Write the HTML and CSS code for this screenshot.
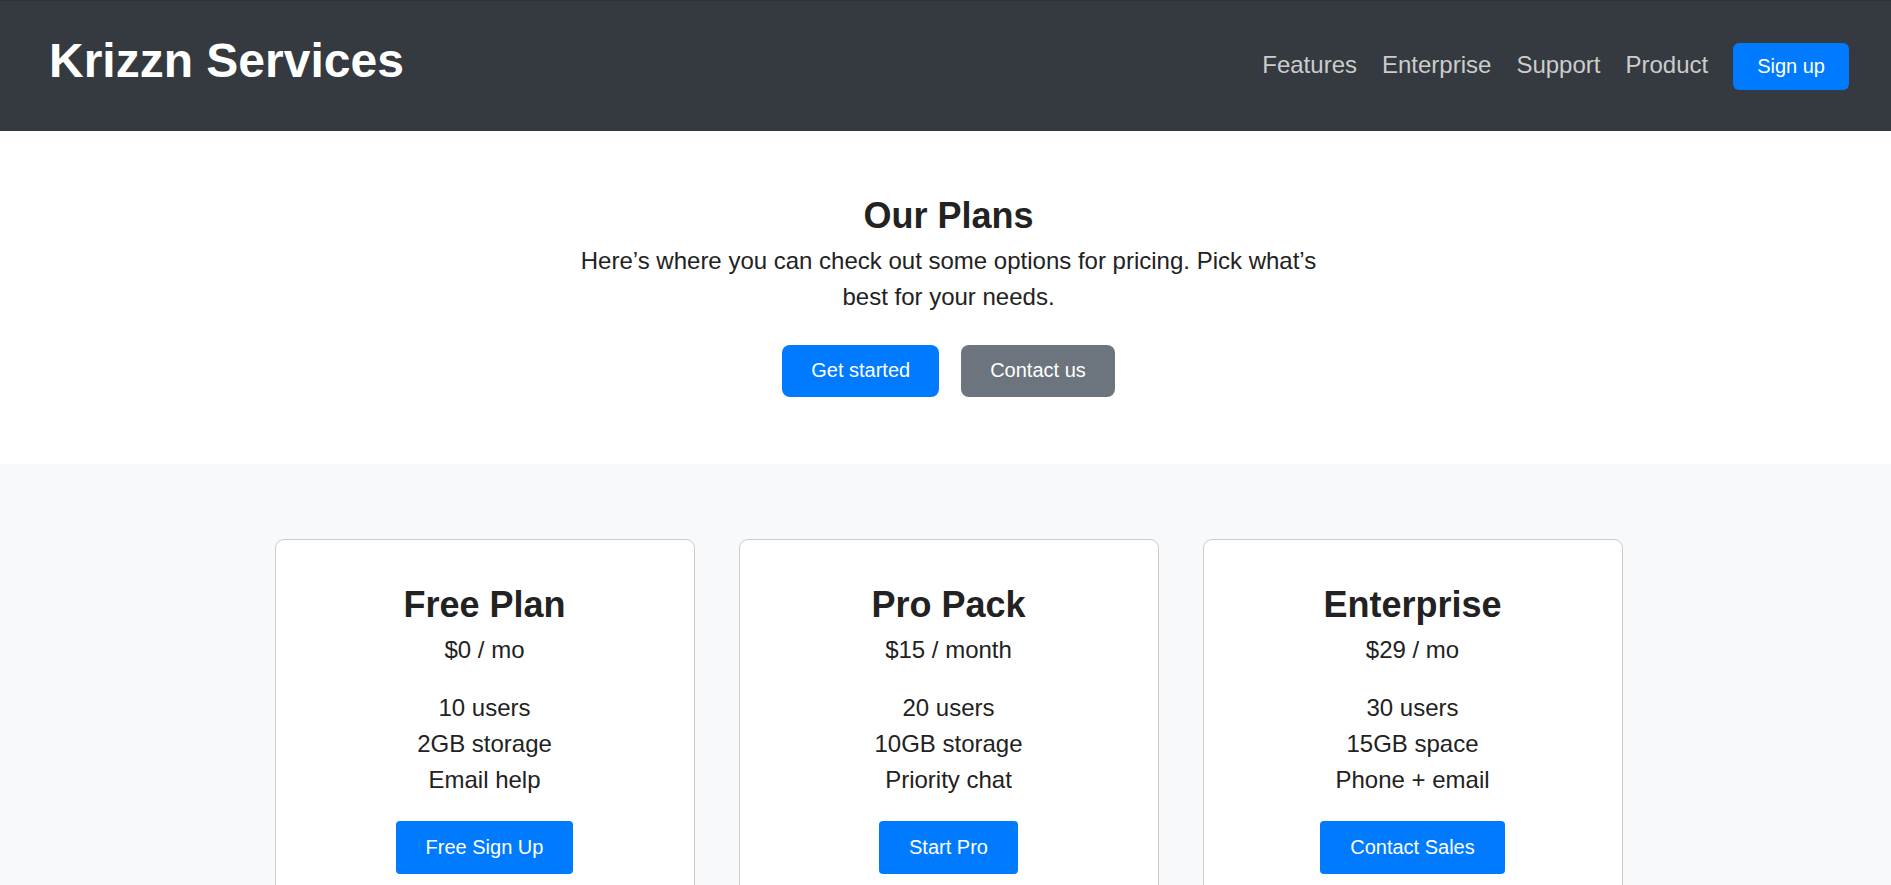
FILE: index.html
```
<!DOCTYPE html>
<html lang="en">
<head>
<meta charset="utf-8">
<meta name="viewport" content="width=device-width, initial-scale=1">
<title>Krizzn Services</title>
<link rel="stylesheet" href="styles.css">
</head>
<body>
<header class="site-header">
  <h1 class="brand">Krizzn Services</h1>
  <nav class="site-nav">
    <a class="nav-link" href="#features">Features</a>
    <a class="nav-link" href="#enterprise">Enterprise</a>
    <a class="nav-link" href="#support">Support</a>
    <a class="nav-link" href="#product">Product</a>
    <button class="btn btn-small" type="button">Sign up</button>
  </nav>
</header>
<main>
  <section class="hero">
    <h2 class="heading">Our Plans</h2>
    <p class="lead">Here’s where you can check out some options for pricing. Pick what’s best for your needs.</p>
    <div class="hero-actions">
      <button class="btn btn-hero" type="button">Get started</button>
      <button class="btn btn-hero btn-secondary" type="button">Contact us</button>
    </div>
  </section>
  <section class="plans">
    <article class="card">
      <h2 class="heading">Free Plan</h2>
      <p class="price">$0 / mo</p>
      <ul class="perks"><li>10 users</li><li>2GB storage</li><li>Email help</li></ul>
      <button class="btn btn-card" type="button">Free Sign Up</button>
    </article>
    <article class="card">
      <h2 class="heading">Pro Pack</h2>
      <p class="price">$15 / month</p>
      <ul class="perks"><li>20 users</li><li>10GB storage</li><li>Priority chat</li></ul>
      <button class="btn btn-card" type="button">Start Pro</button>
    </article>
    <article class="card">
      <h2 class="heading">Enterprise</h2>
      <p class="price">$29 / mo</p>
      <ul class="perks"><li>30 users</li><li>15GB space</li><li>Phone + email</li></ul>
      <button class="btn btn-card" type="button">Contact Sales</button>
    </article>
  </section>
</main>
</body>
</html>
```
FILE: styles.css
```
* {
  box-sizing: border-box;
  margin: 0;
  padding: 0;
}

body {
  font: 24px/36px "Liberation Sans", Arial, sans-serif;
  color: #222;
  background: #fff;
}

.site-header {
  display: flex;
  flex-wrap: wrap;
  justify-content: space-between;
  align-items: center;
  padding: 24px 42px 24px 49px;
  border-top: 1px solid #2f3033;
  background: #343a40;
}

.brand {
  margin-bottom: 10px;
  font-size: 48px;
  line-height: 72px;
  color: #fff;
}

.site-nav {
  display: flex;
  flex-wrap: wrap;
  align-items: baseline;
  gap: 25px;
}

.nav-link {
  color: #ccc;
  text-decoration: none;
}

.btn {
  border: 0;
  font: 20px/23px "Liberation Sans", Arial, sans-serif;
  color: #fff;
  background: #007bff;
  cursor: pointer;
}

.btn-small {
  padding: 12px 24px;
  border-radius: 6px;
}

.btn-hero {
  padding: 14px 29px 15px;
  border-radius: 8px;
}

.btn-secondary {
  background: #6c757d;
}

.btn-card {
  padding: 15px 30px;
  border-radius: 4px;
}

.hero {
  padding: 58px 0 67px 6px;
  text-align: center;
}

.heading {
  font-size: 36px;
  line-height: 54px;
}

.lead {
  max-width: 750px;
  margin: 0 auto 30px;
}

.hero-actions {
  display: flex;
  justify-content: center;
  gap: 22px;
}

.plans {
  display: flex;
  flex-wrap: wrap;
  justify-content: center;
  gap: 44px;
  padding: 75px 0 75px 6px;
  background: #f8f9fb;
}

.card {
  flex: 0 1 420px;
  padding: 38px;
  border: 1px solid #ccc;
  border-radius: 9px;
  text-align: center;
  background: #fff;
}

.price {
  margin-bottom: 22px;
}

.perks {
  margin-bottom: 23px;
  list-style: none;
}
```
